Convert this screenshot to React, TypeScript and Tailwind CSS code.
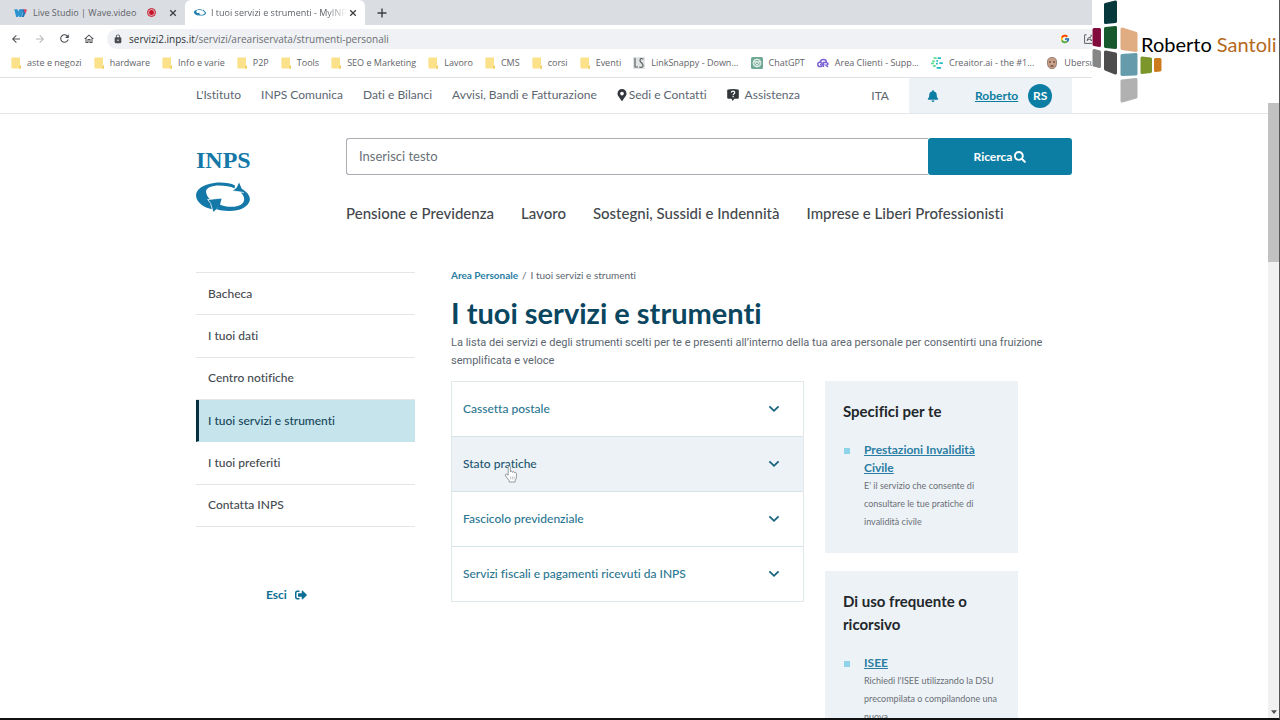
import React from 'react'
import { FaBell, FaMapMarkerAlt, FaSearch, FaSignOutAlt } from 'react-icons/fa'
import { FcGoogle } from 'react-icons/fc'
import { MdArrowBack, MdArrowForward, MdLock, MdOutlineHome, MdRefresh } from 'react-icons/md'
import { clsx } from 'clsx'

const FolderIcon = () => (
  <svg viewBox="0 0 10 12" className="w-[10px] h-3">
    <path d="M1 0.5h8v8.2h0.9v2.8H1.2Q0.4 11.5 0.4 10.7V1.2Q0.4 0.5 1 0.5z" fill="#fbe28a" />
    <path d="M9 8.4h1v3.1H8z" fill="#eccb5c" />
  </svg>
)

const LinkSnappyIcon = () => (
  <svg viewBox="0 0 12 12" className="w-3 h-3">
    <rect width="12" height="12" fill="#dfe3e3" />
    <path d="M2 1v9h3M10.4 2.2Q7 0.4 7 3.4C7 6 10.4 5.6 10 8.8Q9.4 11 6.2 10" fill="none" stroke="#59605f" strokeWidth="1.2" />
  </svg>
)

const ChatGptIcon = () => (
  <svg viewBox="0 0 12 12" className="w-3 h-3">
    <rect width="12" height="12" rx="1.5" fill="#6fa893" />
    <g fill="none" stroke="#fff" strokeWidth="0.7">
      <circle cx="6" cy="6" r="4" />
      <path d="M6 2.4l3 1.8v3.6L6 9.6 3 7.8V4.2zM6 4.2l1.6 0.9v1.8L6 7.8 4.4 6.9V5.1zM3 4.2l3 1.6M9 4.2L6 6M6 9.6V7" />
    </g>
  </svg>
)

const CloudIcon = () => (
  <svg viewBox="0 0 12 12" className="w-3 h-3" fill="none" stroke="#7b63d2" strokeWidth="1.5">
    <circle cx="3" cy="7.4" r="2.2" />
    <path d="M3 7.4h1.6M3.2 5Q3.8 2.2 6.6 2.4T9.2 5M6.4 10V5.4h2.4Q11 5.6 11 7Q11 8.2 9 8.2L11 10" />
  </svg>
)

const CreaitorIcon = () => (
  <svg viewBox="0 0 12 12" className="w-3 h-3" strokeWidth="1.8">
    <path d="M2.6 1.2h3M1.4 4.2h2.4M0 6.4h3M2.2 9h2.4" stroke="#5fe08f" />
    <path d="M6.6 1.2h3.4M5.4 3.8h1.6M8.4 6.2h3.4M5.6 10.8h4.4M5 6.6h1.8" stroke="#25bcc6" />
  </svg>
)

const FaceIcon = () => (
  <svg viewBox="0 0 12 12" className="w-3 h-3">
    <path d="M1.4 5Q1.4 0.4 6 0.4T10.6 5Q10.8 11.7 6 11.7T1.4 5z" fill="#c79e86" stroke="#6e5549" strokeWidth="0.6" />
    <path d="M3 5h2M7 5h2M4.4 9h3.2" stroke="#4b2f28" strokeWidth="1" />
    <path d="M6 5.2v2" stroke="#e0b8a0" strokeWidth="1" />
  </svg>
)

const WaveIcon = () => (
  <svg viewBox="0 0 13 10" className="w-[13px] h-[10px]">
    <path d="M0.3 1.2h3.2l0.8 2.6 1-2.6h2.6l0.8 4L7.2 9H5.4L4.7 7.6 4 9H2.2z" fill="#2b93cf" />
    <path d="M7.4 1.2l1.6 4L7.6 9h2.2l1.8-4-1.2-3.8z" fill="#2479b8" />
    <path d="M9.6 1.4Q12.6 0.4 12.7 2.4L11.4 6z" fill="#e8486a" />
  </svg>
)

const InpsSwirl = ({ className }: { className?: string }) => (
  <svg viewBox="0 0 54 30" className={className} fill="#1478a8">
    <path d="M39 3.4C34 1 26 0 18 1C7 2.6 0 7.6 0 13.4C0.4 20 7 25.4 17 27.4L24 24C17 21.4 10.4 15.6 10 9.6C10 5.8 16 3.6 23 3.6C29 3.6 34.5 4.6 38.6 6.4z" />
    <path d="M43 0.6L47.4 10.4L36.4 8.8L39.4 6.8L41.2 4.8z" />
    <path d="M45.5 6.8C51 9.8 54.4 14 53.8 18.2C52.6 25 43 29.2 33 29C28 28.9 24 28.2 20.6 27.2L23.6 22.4C29 24.8 36 25.6 41.6 24C48.6 22 50.4 16.2 45 10.8z" />
    <path d="M12 17.6L25.6 16.2L24 22.8L20.6 27L17.4 30z" />
    <path d="M11.4 17.6L25.8 16M12 17.8L14.6 21.4M14.6 21.6L17 29.6M36 8.8L47.8 10.5M41 4.4L36.8 8.2" stroke="#fff" strokeWidth="0.8" />
  </svg>
)

const HelpIcon = () => (
  <svg viewBox="0 0 12 12" className="w-3 h-3">
    <path d="M1 0.4L6 0l5 0.4 0.8 0.6v8L11 9.8H7.4L5.4 12 4.6 9.8H1L0.2 9V1z" fill="#33373b" />
    <path d="M4.3 3.6Q4.4 2.2 6 2.2T7.8 3.6Q7.8 4.4 6.8 4.9Q6.1 5.3 6.1 6.2M6.1 7v1.2" fill="none" stroke="#fff" strokeWidth="1.2" />
  </svg>
)

const Chevron = ({ className }: { className?: string }) => (
  <svg viewBox="0 0 12 8" className={clsx('w-3 h-2', className)} fill="none" stroke="currentColor" strokeWidth="1.8">
    <path d="M1.4 1.4L6 5.8l4.6-4.4" />
  </svg>
)

const HandCursor = () => (
  <svg viewBox="0 0 14 18" className="absolute left-[52px] top-7 w-[14px] h-[18px]">
    <path
      d="M4.2 10.2V2.4Q4.2 1 5.3 1T6.4 2.4V7Q6.6 6 7.5 6.1T8.5 7.4Q8.7 6.4 9.6 6.6T10.5 8Q10.8 7.2 11.6 7.4T12.4 8.8V12Q12.4 14 11.2 15.4V17H5.2V15.6L1.6 11Q0.8 9.8 1.8 9.2T4.2 10.2z"
      fill="#fff"
      stroke="#8a8f94"
      strokeWidth="0.9"
    />
    <path d="M6.6 11.4v3M8.4 11.4v3M10.2 11.4v3" stroke="#9ca1a5" strokeWidth="0.6" />
  </svg>
)

const CloseIcon = () => (
  <svg viewBox="0 0 8 8" className="w-2 h-2 mx-auto" stroke="currentColor" strokeWidth="1.3">
    <path d="M1.2 1.2l5.6 5.6M6.8 1.2L1.2 6.8" />
  </svg>
)

const bookmarks = [
  { label: 'aste e negozi', icon: <FolderIcon /> },
  { label: 'hardware', icon: <FolderIcon /> },
  { label: 'Info e varie', icon: <FolderIcon /> },
  { label: 'P2P', icon: <FolderIcon /> },
  { label: 'Tools', icon: <FolderIcon /> },
  { label: 'SEO e Marketing', icon: <FolderIcon /> },
  { label: 'Lavoro', icon: <FolderIcon /> },
  { label: 'CMS', icon: <FolderIcon /> },
  { label: 'corsi', icon: <FolderIcon /> },
  { label: 'Eventi', icon: <FolderIcon /> },
  { label: 'LinkSnappy - Down...', icon: <LinkSnappyIcon /> },
  { label: 'ChatGPT', icon: <ChatGptIcon /> },
  { label: 'Area Clienti - Supp...', icon: <CloudIcon /> },
  { label: 'Creaitor.ai - the #1...', icon: <CreaitorIcon /> },
  { label: 'Ubersugg', icon: <FaceIcon /> },
]

const sideLinks = ['Bacheca', 'I tuoi dati', 'Centro notifiche', 'I tuoi servizi e strumenti', 'I tuoi preferiti', 'Contatta INPS']

const services = ['Cassetta postale', 'Stato pratiche', 'Fascicolo previdenziale', 'Servizi fiscali e pagamenti ricevuti da INPS']

const mainLinks = ['Pensione e Previdenza', 'Lavoro', 'Sostegni, Sussidi e Indennità', 'Imprese e Liberi Professionisti']

const cards = [
  {
    title: 'Specifici per te',
    link: 'Prestazioni Invalidità Civile',
    text: "E' il servizio che consente di consultare le tue pratiche di invalidità civile",
  },
  {
    title: 'Di uso frequente o ricorsivo',
    link: 'ISEE',
    text: "Richiedi l'ISEE utilizzando la DSU precompilata o compilandone una nuova",
  },
]

function BrowserBar() {
  return (
    <div className="shrink-0 font-['Open_Sans','Noto_Sans',sans-serif] text-[#5f6368]">
      <div className="flex h-[25px] bg-[#dadde2] text-[9px]">
        <div className="flex items-center w-[185px] pl-[14px] pr-[6px]">
          <WaveIcon />
          <span className="ml-[6px] flex-1 whitespace-nowrap">Live Studio | Wave.video</span>
          <span className="w-[7px] h-[7px] rounded-full bg-[#c4162a] border border-[#e9b4ba] outline outline-[#c4162a] mr-3" />
          <button aria-label="Chiudi scheda Live Studio" className="w-3 text-[#3c4043]"><CloseIcon /></button>
        </div>
        <div className="flex items-center w-[180px] pl-[9px] pr-[6px] bg-white rounded-t-md">
          <InpsSwirl className="w-3 h-[7px] shrink-0" />
          <span className="ml-[5px] flex-1 whitespace-nowrap [mask-image:linear-gradient(to_right,black_85%,transparent)]">
            I tuoi servizi e strumenti - MyINP
          </span>
          <button aria-label="Chiudi scheda MyINPS" className="w-3 text-[#3c4043]"><CloseIcon /></button>
        </div>
        <button aria-label="Nuova scheda" className="ml-3 text-[#3c4043]">
          <svg viewBox="0 0 10 10" className="w-[10px] h-[10px]" stroke="currentColor" strokeWidth="1.4"><path d="M5 0.5v9M0.5 5h9" /></svg>
        </button>
      </div>

      <div className="flex items-center h-[27px] pl-[10px] gap-3 bg-white text-[#4a4e52]">
        <button aria-label="Indietro"><MdArrowBack className="w-3 h-3" /></button>
        <button aria-label="Avanti" className="text-[#b4b7ba]"><MdArrowForward className="w-3 h-3" /></button>
        <button aria-label="Ricarica"><MdRefresh className="w-[13px] h-[13px]" /></button>
        <button aria-label="Home"><MdOutlineHome className="w-3 h-3" /></button>
        <div className="flex flex-1 items-center h-5 pl-[6px] gap-[6px] rounded-l-full bg-[#eff1f4]">
          <MdLock className="w-[10px] h-[10px]" />
          <span className="flex-1 text-[10px] leading-5 text-[#6a6e73]">
            <span className="text-[#303438]">servizi2.inps.it</span>/servizi/areariservata/strumenti-personali
          </span>
          <FcGoogle className="w-[10px] h-[10px] mr-2" />
          <svg viewBox="0 0 11 11" className="w-[11px] h-[11px] mr-[184px]" fill="none" stroke="#5f6368">
            <path d="M2.6 1.8H0.6v8.6h9V8M3 7.6Q3.4 4 7 4V1.8L10.4 5 7 8V6Q4.6 6 3 7.6z" />
          </svg>
        </div>
      </div>

      <div className="flex items-center h-[26px] pb-1 pl-[11px] gap-3 overflow-hidden bg-white border-b border-[#dfe1e5] text-[9px]">
        {bookmarks.map((b) => (
          <a key={b.label} href="#" className="flex items-center gap-[6px] shrink-0 whitespace-nowrap">
            {b.icon}
            {b.label}
          </a>
        ))}
      </div>
    </div>
  )
}

function OwnerBadge() {
  return (
    <div className="absolute right-0 top-0 flex w-[187px] h-[103px] bg-white">
      <svg viewBox="0 0 70 103" className="absolute left-0 top-0 w-[70px] h-[103px]">
        <g strokeWidth="3" strokeLinejoin="round">
          <path d="M13.5 4.5L23.5 2v19.5L13.5 22.5z" fill="#06383c" stroke="#06383c" />
          <path d="M2 29.5h5.5v16L2 44.5z" fill="#820b3e" stroke="#820b3e" />
          <path d="M13.5 28.5L23.5 27.5v20L13.5 46.5z" fill="#17592c" stroke="#17592c" />
          <path d="M30 29L44 33.5V50.5L30 48.5z" fill="#e0ac82" stroke="#e0ac82" />
          <path d="M2 50.5l5.5 1.5v14.5L2 65z" fill="#868686" stroke="#868686" />
          <path d="M13.5 52l10 2v19L13.5 69z" fill="#4d4d4d" stroke="#4d4d4d" />
          <path d="M30 55.5L44 54.5V74L30 74.5z" fill="#659bab" stroke="#659bab" />
          <path d="M50 58l8.5 1v12.5L50 72.5z" fill="#7c962b" stroke="#7c962b" />
          <path d="M63.5 59.5h4.500v10.500l-4.500 0.500z" fill="#cc7a1e" stroke="#cc7a1e" />
          <path d="M30 81L44 79.5V97L30 101z" fill="#b1b1b1" stroke="#b1b1b1" />
        </g>
      </svg>
      <span className="relative ml-[49px] mt-[30px] whitespace-nowrap font-['Lato',sans-serif] text-[20px] leading-7 text-black">
        Roberto <span className="text-[#b4691c]">Santoli</span>
      </span>
    </div>
  )
}

function SiteHeader() {
  return (
    <header>
      <div className="h-[36px] border-b border-[#e3e7ea]">
        <div className="flex items-center max-w-[876px] h-full mx-auto text-xs text-[#5c6670]">
          <nav aria-label="Istituzionale" className="flex flex-1 items-center gap-5 pb-[2px] whitespace-nowrap">
            <a href="#">L'Istituto</a>
            <a href="#">INPS Comunica</a>
            <a href="#">Dati e Bilanci</a>
            <a href="#">Avvisi, Bandi e Fatturazione</a>
            <a href="#" className="flex items-center gap-[2px]"><FaMapMarkerAlt className="w-[10px] h-3 text-[#33373b]" />Sedi e Contatti</a>
            <a href="#" className="flex items-center gap-[6px]"><HelpIcon />Assistenza</a>
          </nav>
          <button className="mr-5">ITA</button>
          <div className="flex items-center w-[163px] h-full pl-[18px] bg-[#edf2f6] text-[#0d7ea3]">
            <button aria-label="Notifiche"><FaBell className="w-3 h-3" /></button>
            <a href="#" className="ml-9 font-bold underline">Roberto</a>
            <span className="flex items-center justify-center w-6 h-6 ml-[10px] rounded-full bg-[#0d7ea3] text-xs font-bold text-white">RS</span>
          </div>
        </div>
      </div>

      <div className="flex max-w-[876px] mx-auto pt-6">
        <a href="#" aria-label="INPS" className="flex flex-col w-[54px] mr-24 text-[#1478a8]">
          <span className="font-['Liberation_Serif',serif] text-[24px] leading-[44px] font-bold">INPS</span>
          <InpsSwirl className="w-[54px] h-[30px]" />
        </a>
        <div className="flex-1">
          <form className="flex h-[37px]" onSubmit={(e) => e.preventDefault()}>
            <input
              type="text"
              aria-label="Ricerca nel sito"
              placeholder="Inserisci testo"
              className="flex-1 px-3 rounded-l-[3px] border border-r-0 border-[#a9adb1] text-[13px] placeholder:text-[#6a7076]"
            />
            <button className="flex items-center justify-center gap-[2px] w-36 rounded-[3px] bg-[#0d7ea3] text-xs font-bold text-white">
              Ricerca <FaSearch className="w-3 h-3" />
            </button>
          </form>
          <nav aria-label="Principale" className="flex gap-[27px] mt-7 text-[15px] leading-5 font-medium text-[#43484d] whitespace-nowrap">
            {mainLinks.map((l) => <a key={l} href="#">{l}</a>)}
          </nav>
        </div>
      </div>
    </header>
  )
}

function Sidebar() {
  return (
    <aside className="w-[219px] shrink-0 text-xs font-medium text-[#454a4f]">
      <nav aria-label="Area personale" className="grid grid-rows-6 min-h-[255px] border-t border-[#e3e5e7]">
        {sideLinks.map((l, i) => (
          <a
            key={l}
            href="#"
            className={clsx(
              'flex items-center border-b',
              i === 3 ? 'pl-[9px] border-l-[3px] border-l-[#06303f] border-b-[#c5e4ec] bg-[#c5e4ec] text-[#17465a]' : 'pl-3 border-[#e3e5e7]'
            )}
          >
            {l}
          </a>
        ))}
      </nav>
      <a href="#" className="flex items-center w-fit gap-2 ml-[70px] mt-[58px] leading-5 font-bold text-[#0d6f93]">
        Esci <FaSignOutAlt className="w-3 h-3" />
      </a>
    </aside>
  )
}

export default function App() {
  return (
    <div className="relative flex flex-col h-screen overflow-hidden border-b-2 border-b-[#111] border-r border-r-[#555] bg-white">
      <BrowserBar />
      <div className="flex flex-1 min-h-0">
        <div className="flex-1 min-w-0 overflow-hidden font-['Lato',sans-serif] [font-variant-ligatures:none]">
          <SiteHeader />
          <div className="flex max-w-[876px] mx-auto mt-[43px] gap-9">
            <div className="pt-[6px]"><Sidebar /></div>
            <main className="flex-1 min-w-0 pr-[10px]">
              <nav aria-label="Percorso" className="text-[10px] leading-[18px] text-[#5c6670]">
                <a href="#" className="font-bold text-[#2a7ea3]">Area Personale</a>
                <span className="mx-1">/</span>
                <span>I tuoi servizi e strumenti</span>
              </nav>
              <h1 className="mt-[9px] text-[29px] leading-10 font-bold text-[#0b4660]">I tuoi servizi e strumenti</h1>
              <p className="mt-px font-['Roboto',sans-serif] text-[11px] leading-[18px] text-[#5c6670]">
                La lista dei servizi e degli strumenti scelti per te e presenti all’interno della tua area personale per consentirti una fruizione semplificata e veloce
              </p>

              <div className="flex items-start mt-[11px] gap-[21px]">
                <div className="w-[353px] border border-[#e1e8ec]">
                  {services.map((s, i) => (
                    <button
                      key={s}
                      className={clsx(
                        'relative flex items-center justify-between w-full pl-[11px] pr-[23px] text-xs font-medium',
                        i === 0 ? 'h-[54px]' : 'h-[55px] border-t border-[#d5e3e9]',
                        i === 1 ? 'bg-[#edf2f6] text-[#1b5670]' : 'text-[#2a7590]'
                      )}
                    >
                      {s}
                      <Chevron className="text-[#17627f]" />
                      {i === 1 && <HandCursor />}
                    </button>
                  ))}
                </div>

                <div className="flex flex-col w-[193px] gap-[18px]">
                  {cards.map((c) => (
                    <section key={c.title} className="px-[18px] pt-[19px] pb-[22px] bg-[#edf2f6]">
                      <h2 className="text-[15px] leading-[23px] font-bold text-[#22272b]">{c.title}</h2>
                      <ul className="mt-[18px]">
                        <li className="flex gap-[14px]">
                          <span className="shrink-0 w-[6px] h-[6px] mt-[7px] ml-px bg-[#8fd3e8]" />
                          <div>
                            <a href="#" className="block text-xs leading-[18px] font-bold underline text-[#2a7ea3]">{c.link}</a>
                            <p className="text-[9px] leading-[18px] text-[#6a7076]">{c.text}</p>
                          </div>
                        </li>
                      </ul>
                    </section>
                  ))}
                </div>
              </div>
            </main>
          </div>
        </div>

        <div className="flex flex-col w-[11px] shrink-0 bg-[#f1f1f1]">
          <div className="h-40 mt-6 bg-[#c1c1c1]" />
          <svg viewBox="0 0 8 5" className="w-[6px] h-1 mx-auto mt-auto mb-1" fill="#505050"><path d="M0 0h8L4 5z" /></svg>
        </div>
      </div>
      <OwnerBadge />
    </div>
  )
}
